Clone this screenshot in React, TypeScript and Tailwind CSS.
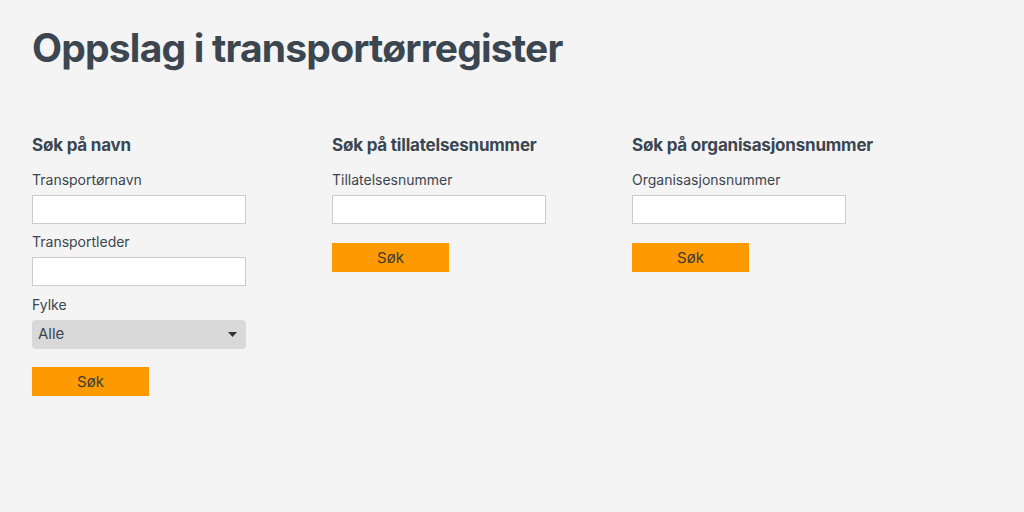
import React from "react";

const font = { fontFamily: "Inter, 'Open Sans', sans-serif" };

const Field: React.FC<{ label: string }> = ({ label }) => (
  <div className="flex flex-col">
    <label className="text-[14px] leading-[20px] text-[#3b4650] mb-[5px]">{label}</label>
    <input
      type="text"
      className="w-[214px] h-[29px] bg-white border border-[#cccccc] outline-none px-2 text-[15px]"
    />
  </div>
);

const SearchButton: React.FC = () => (
  <button className="w-[117px] h-[29px] bg-[#ff9900] text-[#3b3b3b] text-[15px] leading-none">
    Søk
  </button>
);

const App: React.FC = () => {
  return (
    <div className="min-h-[512px] w-full bg-[#f4f4f4] text-[#3b4650]" style={font}>
      <div className="px-8 pt-[22px]">
        <h1 className="text-[39px] leading-[52px] font-bold tracking-[-0.8px]">
          Oppslag i transportørregister
        </h1>

        <div className="flex mt-[59px]">
          {/* Søk på navn */}
          <section className="w-[300px] flex flex-col">
            <h2 className="text-[17px] leading-[24px] font-bold tracking-[-0.2px] mb-[13px]">Søk på navn</h2>
            <div className="flex flex-col gap-[8px]">
              <Field label="Transportørnavn" />
              <Field label="Transportleder" />
              <div className="flex flex-col mt-px">
                <label className="text-[14px] leading-[20px] mb-[5px]">Fylke</label>
                <div className="relative w-[214px] h-[29px] rounded-[4px] bg-[#d9d9d9] flex items-center px-[6px]">
                  <span className="text-[15px]">Alle</span>
                  <svg className="absolute right-[9px] top-[12px]" width="9" height="5" viewBox="0 0 9 5">
                    <path d="M0 0h9L4.5 5z" fill="#333" />
                  </svg>
                </div>
              </div>
            </div>
            <div className="mt-[18px]">
              <SearchButton />
            </div>
          </section>

          {/* Søk på tillatelsesnummer */}
          <section className="w-[300px] flex flex-col">
            <h2 className="text-[17px] leading-[24px] font-bold tracking-[-0.2px] mb-[13px]">Søk på tillatelsesnummer</h2>
            <Field label="Tillatelsesnummer" />
            <div className="mt-[19px]">
              <SearchButton />
            </div>
          </section>

          {/* Søk på organisasjonsnummer */}
          <section className="w-[300px] flex flex-col">
            <h2 className="text-[17px] leading-[24px] font-bold tracking-[-0.2px] mb-[13px]">Søk på organisasjonsnummer</h2>
            <Field label="Organisasjonsnummer" />
            <div className="mt-[19px]">
              <SearchButton />
            </div>
          </section>
        </div>
      </div>
    </div>
  );
};

export default App;
